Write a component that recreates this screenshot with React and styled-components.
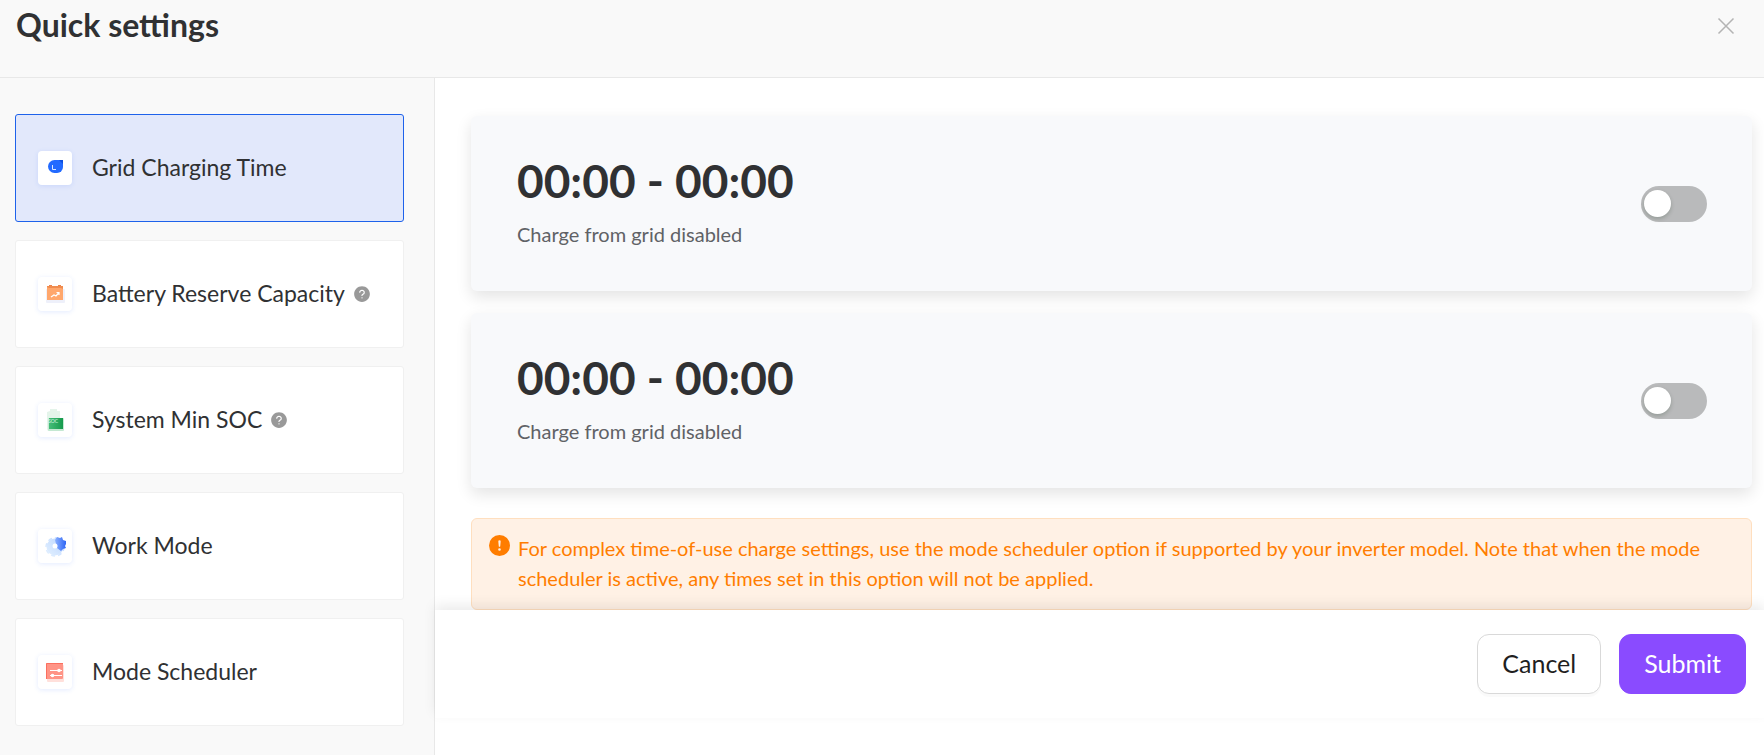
import React, { useState } from 'react'
import styled, { createGlobalStyle, css } from 'styled-components'
import { AiFillQuestionCircle } from 'react-icons/ai'
import { BsExclamationCircleFill } from 'react-icons/bs'

const GlobalStyle = createGlobalStyle`
	*, *::before, *::after { box-sizing: border-box; }
	body { margin: 0; background-color: #fff; color: #303133; font-family: Lato, "Liberation Sans", sans-serif; }
	button { font-family: inherit; color: inherit; cursor: pointer; }
`
const Page = styled.div`
	display: flex; flex-direction: column; min-height: 100vh;
`
const Header = styled.header`
	display: flex; justify-content: space-between; align-items: flex-start; height: 78px; padding: 8px 28px 0 16px;
	background-color: #f9f9f9; border-bottom: 1px solid #e8e8e8;
`
const Heading = styled.h1`
	margin: 0; font-size: 32px; line-height: 34px; font-weight: 700; color: #303133;
`
const CloseButton = styled.button`
	display: flex; padding: 8px 0; border: 0; background: none;
`
const Columns = styled.div`
	display: flex; flex: 1;
`
const Sidebar = styled.nav`
	flex: none; width: 435px; padding: 36px 30px 28px 15px;
	background-color: #f9f9f9; border-right: 1px solid #e8e8e8;
`
const Menu = styled.ul`
	display: flex; flex-direction: column; gap: 18px; margin: 0; padding: 0; list-style: none;
`
const MenuButton = styled.button`
	display: flex; align-items: center; width: 100%; height: 108px; padding: 0 22px;
	border: 1px solid #f0f0f0; border-radius: 3px; background-color: #fff;
	font-size: 23px; line-height: 30px; text-align: left;
	${ ({ $active }) => $active && css`
		border-color: #1e62eb; background-color: #e2e8fb;
	` }
`
const Tile = styled.span`
	display: flex; flex: none; width: 34px; height: 34px; margin-right: 20px;
	border-radius: 4px; background-color: #fff; box-shadow: 0 1px 5px rgba(60, 110, 255, .14);
`
const Label = styled.span`
	padding-bottom: 2px;
`
const Help = styled(AiFillQuestionCircle)`
	flex: none; margin-left: 8px; color: #999;
`
const Main = styled.main`
	flex: 1; min-width: 0;
`
const Content = styled.div`
	padding: 38px 12px 0 36px;
`
const Card = styled.section`
	display: flex; justify-content: space-between; align-items: center; height: 175px; margin-bottom: 22px; padding: 0 45px 0 46px;
	border-radius: 6px; background-color: #f8f9fb; box-shadow: 0 6px 16px rgba(0, 0, 0, .11);
`
const Period = styled.div`
	padding-bottom: 4px;
`
const Time = styled.div`
	margin-bottom: 12px; font-size: 46px; line-height: 52px; font-weight: 700; color: #303133;
`
const Status = styled.label`
	display: block; font-size: 20px; line-height: 30px; color: #606266;
`
const Switch = styled.input`
	appearance: none; display: flex; align-items: center; flex: none; width: 66px; height: 36px; margin: 0; padding: 0 3px;
	border-radius: 18px; background-color: #b9babb; cursor: pointer;
	&::before {
		content: ''; width: 27px; height: 27px; border-radius: 50%; background-color: #fff; box-shadow: 0 2px 4px rgba(0, 35, 11, .2);
	}
	&:checked { justify-content: flex-end; background-color: #8a4bff; }
`
const Notice = styled.div`
	display: flex; margin-top: 30px; padding: 14px 40px 16px 17px;
	border: 1px solid #ffdfbf; border-radius: 6px; background-color: #fff1e5; color: #ff7d00;
	font-size: 20px; line-height: 30px;
	svg { flex: none; margin: 2px 8px 0 0; }
	p { margin: 0; }
`
const Footer = styled.footer`
	position: relative; display: flex; justify-content: flex-end; gap: 18px; padding: 24px 18px;
	background-color: #fff; box-shadow: 0 -5px 12px rgba(0, 0, 0, .08);
`
const Button = styled.button`
	height: 60px; padding: 0 24px 2px; border: 1px solid #d9d9d9; border-radius: 12px; background-color: #fff;
	font-size: 25px; line-height: 32px; color: #1f1f1f; box-shadow: 0 3px 0 rgba(0, 0, 0, .02);
	${ ({ $primary }) => $primary && css`
		border-color: #8a4bff; background-color: #8a4bff; color: #fff; box-shadow: none;
	` }
`

const ChargeIcon = () => (
	<svg width="34" height="34" viewBox="0 0 34 34" aria-hidden="true">
		<path d="M17 9h8v7a6 6 0 0 1-6 6h-2.500a6.500 6.500 0 0 1 0-13z" fill="#226aff" />
		<path d="M21 9h4v4z" fill="#0d4fe0" />
		<path d="M14.500 14v4.500H18" fill="none" stroke="#dbe7ff" />
	</svg>
)

const BatteryIcon = () => (
	<svg width="34" height="34" viewBox="0 0 34 34" aria-hidden="true">
		<rect x="8" y="12" width="19" height="14" rx="1" fill="#eef0fa" />
		<path d="M11 8h3v2h-3zM20 8h3v2h-3z" fill="#ee8448" />
		<rect x="9" y="9" width="16" height="14" fill="#ffa76c" />
		<path d="M9 9h16v3l-2-1H11l-2-1z" fill="#f08c4f" />
		<path d="M13 20l3-2 2 1 3-3.500M18.500 15.500H21V18" fill="none" stroke="#fff" strokeWidth="1.200" />
	</svg>
)

const SocIcon = () => (
	<svg width="34" height="34" viewBox="0 0 34 34" aria-hidden="true">
		<defs>
			<linearGradient id="soc">
				<stop offset="0" stopColor="#45bd78" />
				<stop offset="1" stopColor="#159a4c" />
			</linearGradient>
		</defs>
		<path d="M12 6h7v2h3v20H11a2 2 0 0 1-2-2V9l3-1z" fill="#e4f4ea" />
		<rect x="10" y="15" width="16" height="13" rx="1" fill="#c4e8d2" />
		<rect x="11" y="15" width="14" height="11" fill="url(#soc)" />
		<text x="10" y="20" fontSize="5" fill="#d9f6e4">SOC</text>
	</svg>
)

const GearIcon = () => (
	<svg width="34" height="34" viewBox="0 0 34 34" aria-hidden="true">
		<defs>
			<linearGradient id="gear" x1="0" y1="1" x2="1" y2="0">
				<stop offset="0" stopColor="#e2f0ff" />
				<stop offset="1" stopColor="#bcd6ff" />
			</linearGradient>
			<linearGradient id="gearTop">
				<stop offset="0" stopColor="#8bb0ff" />
				<stop offset="1" stopColor="#2f66f5" />
			</linearGradient>
		</defs>
		<circle cx="17" cy="18" r="8.500" fill="url(#gear)" />
		<circle cx="17" cy="18" r="9" fill="none" stroke="url(#gear)" strokeWidth="1.500" strokeDasharray="4 3" />
		<path d="M17 11l2-3 3 1 2-1 1 3 3 1v3l-1 2 1 2-3 1-2 2-4-3z" fill="url(#gearTop)" />
		<circle cx="17" cy="17" r="2.500" fill="#fff" />
	</svg>
)

const SchedulerIcon = () => (
	<svg width="34" height="34" viewBox="0 0 34 34" aria-hidden="true">
		<rect x="9" y="10" width="17" height="17" rx="1" fill="#ffe0db" />
		<rect x="8" y="8" width="17" height="16" rx="1" fill="#ff9486" />
		<path d="M8.500 24V8.500H25" fill="none" stroke="#fb6f5f" />
		<path d="M12 15.500h12M12 20.500h12" stroke="#fff" strokeWidth="1.200" />
		<circle cx="21" cy="15.500" r="1.800" fill="#fff" />
		<circle cx="14.500" cy="20.500" r="1.800" fill="#fff" />
	</svg>
)

const menu = [
	{ title: 'Grid Charging Time', Icon: ChargeIcon },
	{ title: 'Battery Reserve Capacity', Icon: BatteryIcon, help: true },
	{ title: 'System Min SOC', Icon: SocIcon, help: true },
	{ title: 'Work Mode', Icon: GearIcon },
	{ title: 'Mode Scheduler', Icon: SchedulerIcon },
]

const TimeCard = ({ id, range }) => {
	const [enabled, setEnabled] = useState(false)
	return (
		<Card>
			<Period>
				<Time>{ range }</Time>
				<Status htmlFor={ id }>Charge from grid { enabled ? 'enabled' : 'disabled' }</Status>
			</Period>
			<Switch id={ id } type="checkbox" checked={ enabled } onChange={ () => setEnabled(!enabled) } />
		</Card>
	);
}

const App = () => {
	const [active, setActive] = useState(0)
	return (
		<Page>
			<GlobalStyle />
			<Header>
				<Heading>Quick settings</Heading>
				<CloseButton aria-label="Close">
					<svg width="20" height="20" viewBox="0 0 20 20">
						<path d="M2.500 2.500l15 15M17.500 2.500l-15 15" stroke="#b4b4b4" strokeWidth="1.500" />
					</svg>
				</CloseButton>
			</Header>
			<Columns>
				<Sidebar>
					<Menu>
						{ menu.map(({ title, Icon, help }, i) => (
							<li key={ title }>
								<MenuButton $active={ i === active } onClick={ () => setActive(i) }>
									<Tile><Icon /></Tile>
									<Label>{ title }</Label>
									{ help && <Help size={ 18 } /> }
								</MenuButton>
							</li>
						)) }
					</Menu>
				</Sidebar>
				<Main>
					<Content>
						<TimeCard id="period-1" range="00:00 - 00:00" />
						<TimeCard id="period-2" range="00:00 - 00:00" />
						<Notice>
							<BsExclamationCircleFill size={ 21 } />
							<p>For complex time-of-use charge settings, use the mode scheduler option if supported by your inverter model. Note that when the mode scheduler is active, any times set in this option will not be applied.</p>
						</Notice>
					</Content>
					<Footer>
						<Button>Cancel</Button>
						<Button $primary>Submit</Button>
					</Footer>
				</Main>
			</Columns>
		</Page>
	);
}

export default App;
